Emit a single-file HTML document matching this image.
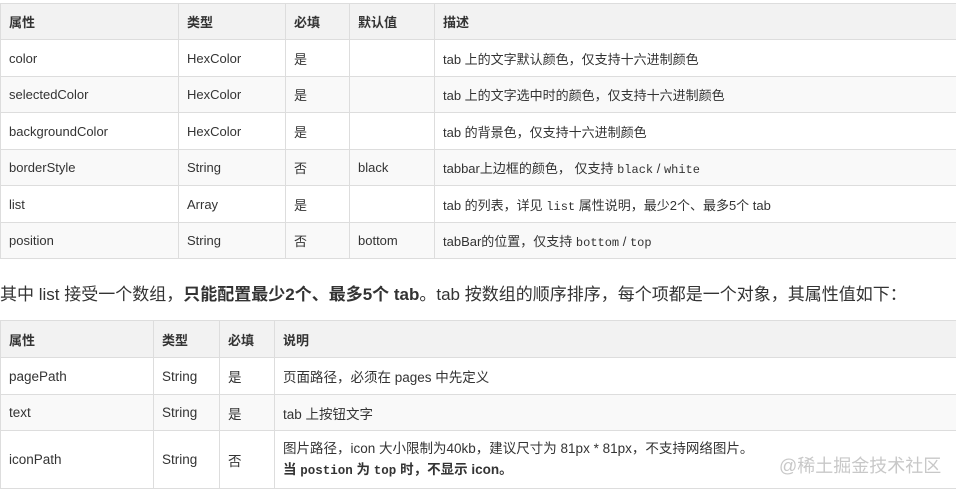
<!DOCTYPE html>
<html><head><meta charset="utf-8"><style>
body{margin:0;width:956px;height:491px;overflow:hidden;background:#fff;font-family:"Liberation Sans","Noto Sans CJK SC",sans-serif;color:#333;font-size:13px}
table{border-collapse:collapse;position:absolute;left:0;table-layout:fixed}
td,th{border:1px solid #ddd;padding:0 8px;text-align:left;vertical-align:middle;white-space:nowrap}
th{background:#f2f2f2;font-weight:bold;color:#333}
tr:nth-child(odd) td{background:#f9f9f9}
.m{font-family:"Liberation Mono","Noto Sans CJK SC",monospace;font-size:12px}
p{position:absolute;left:0;top:280px;margin:0;font-size:17px;color:#333;white-space:nowrap}
.wm{position:absolute;left:779px;top:452px;font-size:18px;color:#c8c8c8;font-family:"Liberation Sans","Noto Sans CJK SC",sans-serif}
.t2 td{font-size:13.5px}
.t2 td .m{font-size:12.5px}
</style></head><body>
<table style="top:3px;width:957px">
<colgroup><col style="width:178px"><col style="width:107px"><col style="width:64px"><col style="width:85px"><col></colgroup>
<tr style="height:36px"><th>属性</th><th>类型</th><th>必填</th><th>默认值</th><th>描述</th></tr>
<tr style="height:37px"><td>color</td><td>HexColor</td><td>是</td><td></td><td>tab 上的文字默认颜色，仅支持十六进制颜色</td></tr>
<tr style="height:36px"><td>selectedColor</td><td>HexColor</td><td>是</td><td></td><td>tab 上的文字选中时的颜色，仅支持十六进制颜色</td></tr>
<tr style="height:37px"><td>backgroundColor</td><td>HexColor</td><td>是</td><td></td><td>tab 的背景色，仅支持十六进制颜色</td></tr>
<tr style="height:36px"><td>borderStyle</td><td>String</td><td>否</td><td>black</td><td>tabbar上边框的颜色， 仅支持 <span class="m">black</span> / <span class="m">white</span></td></tr>
<tr style="height:37px"><td>list</td><td>Array</td><td>是</td><td></td><td>tab 的列表，详见 <span class="m">list</span> 属性说明，最少2个、最多5个 tab</td></tr>
<tr style="height:36px"><td>position</td><td>String</td><td>否</td><td>bottom</td><td>tabBar的位置，仅支持 <span class="m">bottom</span> / <span class="m">top</span></td></tr>
</table>
<p>其中 list 接受一个数组，<b>只能配置最少2个、最多5个 tab</b>。tab 按数组的顺序排序，每个项都是一个对象，其属性值如下：</p>
<table class="t2" style="top:320px;width:957px">
<colgroup><col style="width:153px"><col style="width:66px"><col style="width:55px"><col></colgroup>
<tr style="height:37px"><th>属性</th><th>类型</th><th>必填</th><th>说明</th></tr>
<tr style="height:37px"><td style="background:#fff">pagePath</td><td style="background:#fff">String</td><td style="background:#fff">是</td><td style="background:#fff">页面路径，必须在 pages 中先定义</td></tr>
<tr style="height:36px"><td>text</td><td>String</td><td>是</td><td>tab 上按钮文字</td></tr>
<tr style="height:58px"><td style="background:#fff">iconPath</td><td style="background:#fff">String</td><td style="background:#fff">否</td><td style="background:#fff;line-height:21px">图片路径，icon 大小限制为40kb，建议尺寸为 81px * 81px，不支持网络图片。<br><b>当 <span class="m">postion</span> 为 <span class="m">top</span> 时，不显示 icon。</b></td></tr>
</table>
<div class="wm">@稀土掘金技术社区</div>
</body></html>
